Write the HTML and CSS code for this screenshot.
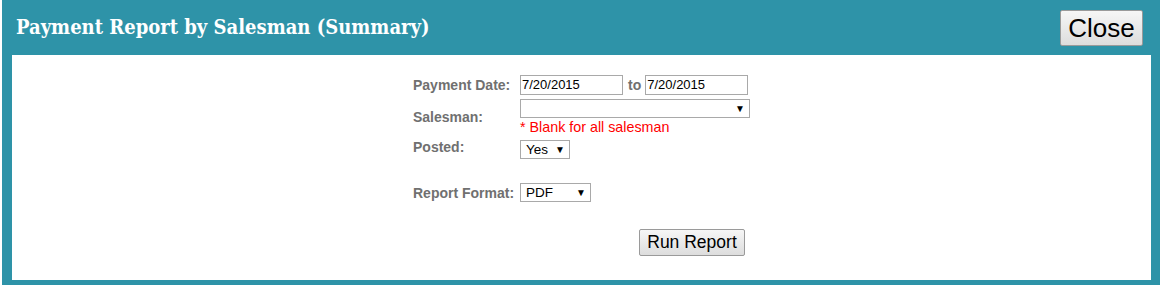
FILE: index.html
```html
<!DOCTYPE html>
<html>
<head>
<meta charset="utf-8">
<link rel="stylesheet" href="styles.css">
</head>
<body>
<div class="dialog">
  <div class="titlebar">
    <h1 class="title">Payment Report by Salesman (Summary)</h1>
    <button class="close-btn">Close</button>
  </div>
  <div class="panel">
    <table class="form">
      <tr class="row-date">
        <td class="label">Payment Date:</td>
        <td class="field"><input class="date" type="text" value="7/20/2015"><span class="to">to</span><input class="date" type="text" value="7/20/2015"></td>
      </tr>
      <tr class="row-sales">
        <td class="label">Salesman:</td>
        <td class="field"><div class="select sel-sales"><span></span><span class="arrow">▼</span></div><div class="note">* Blank for all salesman</div></td>
      </tr>
      <tr class="row-posted">
        <td class="label">Posted:</td>
        <td class="field"><div class="select sel-posted"><span>Yes</span><span class="arrow">▼</span></div></td>
      </tr>
      <tr class="row-format">
        <td class="label">Report Format:</td>
        <td class="field"><div class="select sel-format"><span>PDF</span><span class="arrow">▼</span></div></td>
      </tr>
      <tr class="row-run">
        <td></td>
        <td class="field run-cell"><button class="run-btn">Run Report</button></td>
      </tr>
    </table>
  </div>
</div>
</body>
</html>
```

FILE: styles.css
```css
html, body {
  margin: 0;
  padding: 0;
  background: #ffffff;
  overflow: hidden;
}
body {
  padding-left: 2px;
}
.dialog {
  background: #2e93a8;
  padding: 0 10px 5px 10px;
  height: 285px;
  box-sizing: border-box;
  width: 1159px;
}
.titlebar {
  height: 55px;
  display: flex;
  align-items: flex-start;
  justify-content: space-between;
}
.title {
  margin: 15px 0 0 4px;
  font-family: "DejaVu Serif Condensed", "DejaVu Serif", serif;
  font-weight: bold;
  font-size: 20px;
  color: #ffffff;
}
.close-btn {
  margin: 10px 8px 0 0;
  width: 83px;
  height: 36px;
  font-family: "Liberation Sans", Arial, sans-serif;
  font-size: 26px;
  color: #000;
  background: linear-gradient(#f6f6f6, #dddddd);
  border: 1px solid #9a9a9a;
  border-radius: 2px;
  padding: 0;
}
.panel {
  background: #ffffff;
  height: 225px;
  width: 1139px;
  padding-top: 17px;
  box-sizing: border-box;
}
.form {
  margin: 0 auto;
  border-collapse: collapse;
  font-family: "Liberation Sans", Arial, sans-serif;
}
.form td {
  padding: 0;
}
.label {
  color: #707070;
  font-weight: bold;
  font-size: 14px;
  width: 107px;
  vertical-align: middle;
  white-space: nowrap;
}
.row-date td { height: 25px; }
.row-sales td { height: 39px; }
.row-posted td { height: 23px; }
.row-format td { height: 21px; }
.row-posted .label { vertical-align: top; padding-top: 3px; }
.row-format td { padding-top: 20px; }
.date {
  width: 103px;
  height: 20px;
  box-sizing: border-box;
  border: 1px solid #a9a9a9;
  font-family: "Liberation Sans", Arial, sans-serif;
  font-size: 13px;
  padding: 0 1px;
  margin: 0;
  vertical-align: middle;
  color: #000;
}
.to {
  color: #707070;
  font-weight: bold;
  font-size: 14px;
  margin: 0 4px 0 5px;
  vertical-align: middle;
}
.select {
  display: flex;
  align-items: center;
  justify-content: space-between;
  box-sizing: border-box;
  border: 1px solid #a9a9a9;
  height: 19px;
  font-size: 13.5px;
  color: #000;
  padding: 0 4px 0 5px;
  background: #fff;
}
.arrow {
  font-size: 10px;
}
.sel-sales { width: 230px; }
.sel-posted { width: 50px; margin-top: 1px; }
.sel-format { width: 71px; }
.note {
  color: #ff0000;
  font-size: 14.3px;
  margin-top: 1px;
  line-height: 16px;
}
.run-cell {
  padding-top: 26px !important;
  padding-left: 119px !important;
}
.run-btn {
  width: 106px;
  height: 27px;
  font-family: "Liberation Sans", Arial, sans-serif;
  font-size: 17.5px;
  color: #000;
  background: linear-gradient(#f6f6f6, #dddddd);
  border: 1px solid #9a9a9a;
  border-radius: 2px;
  padding: 0;
}
```
